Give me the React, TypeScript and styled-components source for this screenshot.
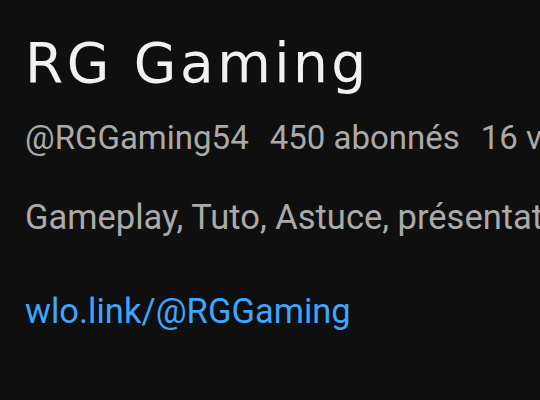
import React from "react";
import styled, { createGlobalStyle } from "styled-components";

const Global = createGlobalStyle`
  html, body { margin: 0; padding: 0; background: #0f0f0f; }
  body { width: 540px; height: 400px; overflow: hidden; }
`;

const Page = styled.div`
  box-sizing: border-box;
  width: 540px;
  height: 400px;
  padding: 36px 0 0 25px;
  background: #0f0f0f;
  display: flex;
  flex-direction: column;
  overflow: hidden;
`;

const Title = styled.h1`
  margin: 0;
  font-family: "DejaVu Sans", sans-serif;
  font-weight: 400;
  font-size: 55px;
  line-height: 55px;
  letter-spacing: 3.5px;
  color: #f1f1f1;
  white-space: nowrap;
`;

const Meta = styled.div`
  margin-top: 30px;
  display: flex;
  gap: 21px;
  font-family: Roboto, "Liberation Sans", sans-serif;
  font-size: 33px;
  line-height: 33px;
  color: #aaaaaa;
  white-space: nowrap;
`;

const Description = styled.p`
  margin: 46px 0 0;
  font-family: Roboto, "Liberation Sans", sans-serif;
  font-size: 34.5px;
  line-height: 34.5px;
  color: #aaaaaa;
  white-space: nowrap;
`;

const Link = styled.a`
  margin-top: 59px;
  align-self: flex-start;
  font-family: Roboto, "Liberation Sans", sans-serif;
  font-size: 34.5px;
  line-height: 34.5px;
  color: #3ea6ff;
  text-decoration: none;
  white-space: nowrap;
`;

export default function App() {
  return (
    <>
      <Global />
      <Page>
        <Title>RG Gaming</Title>
        <Meta>
          <span>@RGGaming54</span>
          <span>450 abonnés</span>
          <span>16 vidéos</span>
        </Meta>
        <Description>Gameplay, Tuto, Astuce, présentation de jeux</Description>
        <Link href="#">wlo.link/@RGGaming</Link>
      </Page>
    </>
  );
}
